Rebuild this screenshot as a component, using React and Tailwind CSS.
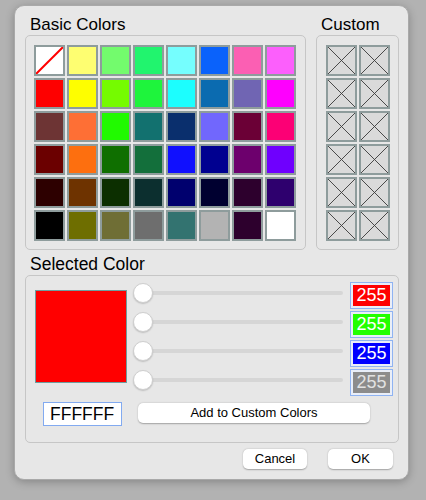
import React from "react";

const basic = [
  ["none", "#fefe71", "#73fb6d", "#21f46e", "#75fefe", "#0a62fb", "#fb5fb3", "#fc5ffc"],
  ["#fe0000", "#fefe00", "#75fb00", "#1ef43c", "#1cfefe", "#0b6bb0", "#7065b3", "#fe00fe"],
  ["#6d3434", "#fe6f35", "#21fa00", "#12716f", "#0a2f6d", "#7167fd", "#6b0036", "#fc0075"],
  ["#6b0000", "#fd6f0f", "#0f6f00", "#136f3b", "#1010fe", "#000090", "#6d006d", "#6f00fe"],
  ["#2d0000", "#6e3300", "#0c2f00", "#0c2f2f", "#00006e", "#000030", "#2d002d", "#2e006e"],
  ["#000000", "#6e6e00", "#6f6e35", "#6e6e6e", "#337370", "#b3b3b3", "#2d002d", "#ffffff"],
];

const channels = [
  { bg: "bg-[#ff0000]", text: "text-white" },
  { bg: "bg-[#22ff00]", text: "text-white" },
  { bg: "bg-[#0000ff]", text: "text-white" },
  { bg: "bg-[#8c8c8c]", text: "text-[#e2e2e2]" },
];

const font = { fontFamily: '"Liberation Sans", Arial, sans-serif' };

const Swatch = ({ color }) => {
  if (color === "none") {
    return (
      <div className="w-[31px] h-[31px] border-2 border-[#8e9c9c] bg-white">
        <svg width="27" height="27" viewBox="0 0 27 27">
          <line x1="0" y1="27" x2="27" y2="0" stroke="#ff0000" strokeWidth="2" />
        </svg>
      </div>
    );
  }
  return (
    <div
      className="w-[31px] h-[31px] border-2 border-[#8e9c9c]"
      style={{ backgroundColor: color }}
    />
  );
};

const EmptyCell = () => (
  <div className="w-[31px] h-[31px] border-2 border-[#8e9c9c] bg-[#dadada]">
    <svg width="27" height="27" viewBox="0 0 27 27">
      <line x1="0" y1="0" x2="27" y2="27" stroke="#3a3a3a" strokeWidth="0.9" />
      <line x1="27" y1="0" x2="0" y2="27" stroke="#3a3a3a" strokeWidth="0.9" />
    </svg>
  </div>
);

const Slider = () => (
  <div className="h-[29px] w-[210px] relative">
    <div className="absolute left-[10px] right-0 top-[8px] h-[4px] rounded-full bg-[#d6d6d6]" />
    <div className="absolute left-0 top-0 w-[20px] h-[20px] rounded-full bg-white border border-[#cfcfcf] shadow-[0_1px_1.5px_rgba(0,0,0,0.18)]" />
  </div>
);

export default function App() {
  return (
    <div className="w-[426px] h-[500px] bg-[#b2b2b2] pt-[5px] pl-[14px]" style={font}>
      <div className="w-[395px] h-[475px] rounded-[10px] bg-[#e7e7e7] border border-[#a9a9a9] shadow-[0_2px_8px_rgba(0,0,0,0.25)] pl-[10px] text-black">
        {/* top groups */}
        <div className="flex">
          <div className="w-[281px]">
            <div className="h-[29px] pt-[9px] pl-[5px] text-[17px] leading-[20px]">Basic Colors</div>
            <div className="h-[215px] border border-[#c6c6c6] rounded-[5px] pt-[9px] pl-[8px]">
              <div className="grid grid-cols-8 gap-[2px] w-[262px]">
                {basic.flat().map((c, i) => (
                  <Swatch key={i} color={c} />
                ))}
              </div>
            </div>
          </div>
          <div className="w-[83px] ml-[10px]">
            <div className="h-[29px] pt-[9px] pl-[5px] text-[17px] leading-[20px]">Custom</div>
            <div className="h-[215px] border border-[#c6c6c6] rounded-[5px] pt-[9px] pl-[9px]">
              <div className="grid grid-cols-2 gap-[2px] w-[64px]">
                {Array.from({ length: 12 }).map((_, i) => (
                  <EmptyCell key={i} />
                ))}
              </div>
            </div>
          </div>
        </div>

        {/* selected color */}
        <div className="h-[25px] pt-[4px] pl-[5px] text-[17.5px] leading-[20px]">Selected Color</div>
        <div className="w-[374px] h-[168px] border border-[#c6c6c6] rounded-[5px]">
          <div className="h-[126px] flex">
            <div className="ml-[9px] mt-[14px] w-[92px] h-[93px] bg-[#ff0000] border border-[#6e9e9e]" />
            <div className="ml-[6px] mt-[7px] flex flex-col">
              <Slider />
              <Slider />
              <Slider />
              <Slider />
            </div>
            <div className="ml-[7px] mt-[6px] flex flex-col gap-[2px]">
              {channels.map((ch, i) => (
                <div key={i} className="w-[43px] h-[27px] border border-[#8fb3f2] bg-[#e9eef8] p-[2px]">
                  <div className={`w-full h-full ${ch.bg} ${ch.text} text-[18px] leading-[21px] text-center`}>
                    255
                  </div>
                </div>
              ))}
            </div>
          </div>
          <div className="h-[24px] flex items-start">
            <div className="ml-[17px] w-[79px] h-[24px] border border-[#82aaf0] bg-white text-[17.5px] leading-[22px] pl-[6px]">
              FFFFFF
            </div>
            <button className="ml-[16px] mt-[1px] w-[232px] h-[20px] rounded-[5px] bg-white shadow-[0_0.5px_1.5px_rgba(0,0,0,0.3)] text-[13px] leading-[20px]">
              Add to Custom Colors
            </button>
          </div>
        </div>

        {/* dialog buttons */}
        <div className="flex mt-[6px] pl-[218px]">
          <button className="w-[64px] h-[20px] rounded-[5px] bg-white shadow-[0_0.5px_1.5px_rgba(0,0,0,0.3)] text-[13px] leading-[20px]">
            Cancel
          </button>
          <button className="ml-[21px] w-[65px] h-[20px] rounded-[5px] bg-white shadow-[0_0.5px_1.5px_rgba(0,0,0,0.3)] text-[13px] leading-[20px]">
            OK
          </button>
        </div>
      </div>
    </div>
  );
}
